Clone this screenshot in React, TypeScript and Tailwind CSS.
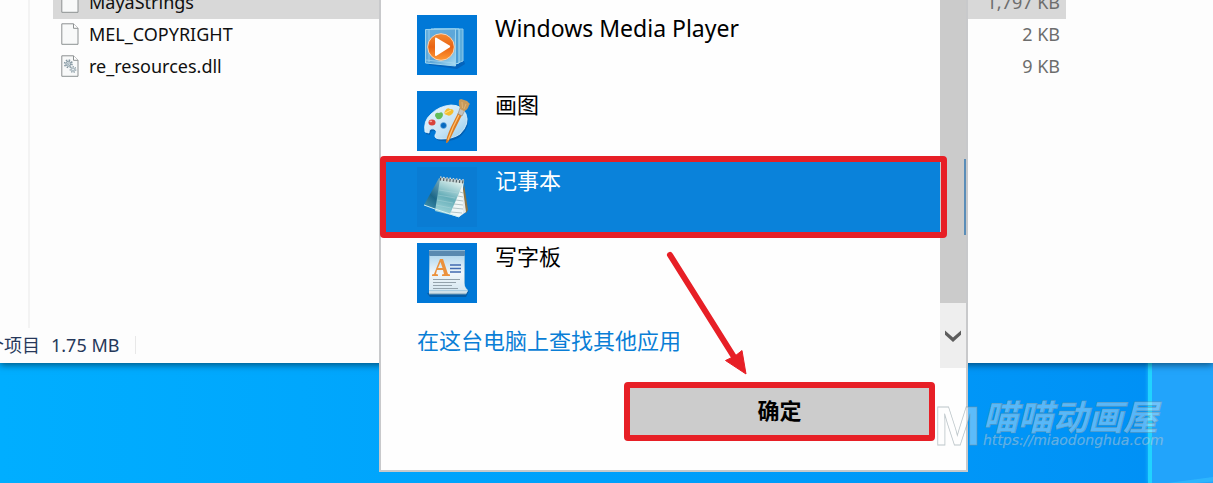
import React from "react";

function PageIcon({ gears = false }: { gears?: boolean }) {
  return (
    <svg width="18" height="22" viewBox="0 0 18 22" fill="none" className="block">
      <path d="M.8.8H12.5L17 5.3V21.3H.8Z" fill="#f8f9f9" stroke="#8d9192" />
      <path d="M12.5.8V5.3H17" fill="#fff" stroke="#8d9192" />
      {gears && (
        <g stroke="#8799a3">
          <circle cx="7.3" cy="8.8" r="3.7" strokeWidth="1.6" strokeDasharray="1.5 1.4" />
          <circle cx="7.3" cy="8.8" r="2.5" fill="#d3dde2" strokeWidth="1" />
          <circle cx="7.3" cy="8.8" r=".8" fill="#fff" strokeWidth=".7" />
          <circle cx="12" cy="14.5" r="2.7" strokeWidth="1.4" strokeDasharray="1.2 1.2" />
          <circle cx="12" cy="14.5" r="1.6" fill="#e5ebee" strokeWidth=".8" />
        </g>
      )}
    </svg>
  );
}

function MediaPlayerIcon() {
  return (
    <svg viewBox="0 0 60 60" width="60" height="60">
      <defs>
        <linearGradient id="mp-case" x1="0" y1="0" x2="1" y2="1">
          <stop stopColor="#65afe0" />
          <stop offset=".55" stopColor="#5ca6d8" />
          <stop offset="1" stopColor="#a8dcf3" />
        </linearGradient>
        <linearGradient id="mp-disc" x1="0" y1="0" x2="0" y2="1">
          <stop stopColor="#f38a31" />
          <stop offset=".5" stopColor="#ea6413" />
          <stop offset="1" stopColor="#ff9a35" />
        </linearGradient>
      </defs>
      <path d="M12 50 40 54 48 49 47 46 10 45Z" fill="#0552a5" opacity=".55" />
      <path d="M17 14H46V46L38 49Z" fill="#5daddd" stroke="#8ecaeb" />
      <path d="M14 14H42V48L35 50Z" fill="#4b9ed5" stroke="#a8ddf4" />
      <path d="M8.5 14.5 38.5 14V51L8.5 48Z" fill="url(#mp-case)" stroke="#9ad2ee" />
      <path d="M12 15V47M9 45 38 48" stroke="#a9d7ef" strokeWidth=".7" fill="none" />
      <circle cx="24" cy="32" r="13.3" fill="url(#mp-disc)" stroke="#f7d4b7" strokeWidth="1" />
      <path d="M18 23.5Q18 22 19.5 22.8L32.5 30.5Q34 31.5 32.5 32.6L19.5 40.8Q18 41.5 18 40Z" fill="#fff" />
    </svg>
  );
}

function PaintIcon() {
  return (
    <svg viewBox="0 0 60 60" width="60" height="60">
      <defs>
        <linearGradient id="pt-board" x1="0" y1="0" x2="1" y2="1">
          <stop stopColor="#e9f4fb" />
          <stop offset=".6" stopColor="#c6e4f6" />
          <stop offset="1" stopColor="#8fc8eb" />
        </linearGradient>
      </defs>
      <path d="M8 42Q6 31 14 24 22 16 34 15 45 15 49 24 53 34 43 44 36 50 24 49 17 49 18 44 21 40 17 39 12 38 12 43Z" fill="#064e98" opacity=".55" transform="translate(1 1)" />
      <path d="M8 41Q6 30 14 23 22 15 34 14 45 14 49 23 53 33 43 43 36 48 24 48 17 48 18 44 21 40 17 38 12 37 12 42Z" fill="url(#pt-board)" stroke="#e5f5fe" strokeWidth=".8" />
      <circle cx="26.5" cy="34.5" r="3" fill="#086ac0" stroke="#74b2dd" strokeWidth=".6" />
      <ellipse cx="15" cy="31.5" rx="3.5" ry="3" fill="#d8433c" />
      <ellipse cx="13.8" cy="30.4" rx="1.4" ry=".8" fill="#f4a5a1" />
      <path d="M18 25Q18 21 22 22 26 20 26 24 25 29 20 28Z" fill="#62bd5a" />
      <path d="M28 20Q30 16 33 18 38 18 36 22 33 26 30 24Q26 23 28 20Z" fill="#f6bd2f" />
      <path d="M28 22 34 19" stroke="#ffe28a" />
      <path d="M41 22 45 24 36 42Q31 53 29 52 29 47 34 36Z" fill="#dd7b20" />
      <path d="M42 24Q36 35 31 49" fill="none" stroke="#ffc071" strokeWidth="1.3" />
      <path d="M43 17 48 19 45 25 41 23Z" fill="#c4c3bf" stroke="#87735f" strokeWidth=".5" />
      <path d="M42 9 44 8 47 9 50 10 53 13 52 14Q51 19 47 20L43 18Q41 13 42 9Z" fill="#c89a5b" />
      <path d="M45 11 45.5 17M49 13 47 18" stroke="#e4bf84" strokeWidth=".7" />
    </svg>
  );
}

function NotepadIcon() {
  return (
    <svg viewBox="0 0 60 60" width="60" height="60">
      <defs>
        <linearGradient id="np-sheet" x1=".6" y1="0" x2=".3" y2="1">
          <stop stopColor="#dff1ee" />
          <stop offset=".5" stopColor="#65adb8" />
          <stop offset="1" stopColor="#a9dbde" />
        </linearGradient>
        <linearGradient id="np-back" x1="1" y1="0" x2="0" y2="1">
          <stop stopColor="#c7e9f1" />
          <stop offset=".65" stopColor="#1c6788" />
          <stop offset="1" stopColor="#4fa3c0" />
        </linearGradient>
      </defs>
      <path d="M47 17 51 43 49 46 43 43Z" fill="#8b7444" />
      <path d="M45 15 49 45 42 50 40 20Z" fill="#e2e8ea" />
      <path d="M22 11 7 38 21 43 40 47 47 16Z" fill="url(#np-back)" />
      <path d="M23 12 46 15 42 50 18 44Z" fill="url(#np-sheet)" />
      <path d="M46 17 33 47 42 50 46 46Z" fill="#f0f7f7" />
      <path d="M43 25 46 26M41 29 46 30M39 33 46 34M37 37 46 38M36 41 46 42M34 45 45 46" stroke="#a5b7b9" strokeWidth=".8" />
      <path d="M22 23 41 26M21 28 38 31M20 33 36 36M19 38 34 41" stroke="#bddfe3" strokeWidth=".6" opacity=".6" />
      <path d="M7 38 18 42 42 50" stroke="#d5f0f3" fill="none" />
      <path d="M23 12 47 15" stroke="#c8d3d4" strokeWidth="3" />
      <path d="M23 11.5 47 14.5" stroke="#536366" strokeWidth="4" strokeDasharray="1.2 2" />
      <path d="M23 10 47 13" stroke="#e2eaeb" strokeWidth="1.2" strokeDasharray="1.5 1.7" />
    </svg>
  );
}

function WordpadIcon() {
  return (
    <svg viewBox="0 0 60 60" width="60" height="60">
      <defs>
        <linearGradient id="wp-page" x1="0" y1="0" x2="0" y2="1">
          <stop stopColor="#b4d8ee" />
          <stop offset=".5" stopColor="#f0f7fb" />
          <stop offset="1" stopColor="#d7e8f1" />
        </linearGradient>
      </defs>
      <path d="M10 50 52 48 49 54H13Z" fill="#0b4f8c" opacity=".65" />
      <path d="M12 8H48V43L51 48 49 51H12Z" fill="#83b8da" />
      <path d="M13 13H47V40Q48 46 51 47H12Z" fill="url(#wp-page)" />
      <rect x="12" y="7" width="36" height="6" rx="1" fill="#5989b0" />
      <path d="M12 7.5H48" stroke="#8eb8d5" />
      <path d="M15 33V31.5L17 31 23 16H26L31 31 33 31.5V33H25V31.5L27 31 26 27H20L19 31 21 31.5V33ZM21 25H25.5L23.5 19Z" fill="#eb923d" fillRule="evenodd" />
      <path d="M33 22H44M33 25.5H44M33 29H44" stroke="#416bb0" strokeWidth="1.7" />
      <path d="M16 36.5H43M16 39.5H39M16 42.5H35M16 45.5H41" stroke="#93a2ab" strokeWidth="1" />
      <path d="M12 47.5H51L49 51H12Z" fill="#d0e0e8" />
      <path d="M12 51H49" stroke="#769cb4" />
    </svg>
  );
}

const files = [
  { name: "MayaStrings", size: "1,797 KB", selected: true },
  { name: "MEL_COPYRIGHT", size: "2 KB" },
  { name: "re_resources.dll", size: "9 KB", gears: true },
];

const apps = [
  { name: "Windows Media Player", Icon: MediaPlayerIcon, latin: true },
  { name: "画图", Icon: PaintIcon },
  { name: "记事本", Icon: NotepadIcon, selected: true },
  { name: "写字板", Icon: WordpadIcon },
];

function Explorer() {
  return (
    <section className="relative h-[363px] overflow-hidden bg-[#fdfdfd] shadow-[0_2px_7px_#00000080]">
      <div className="flex h-[328px] items-start">
        <div className="h-full w-[30px] shrink-0 border-r-2 border-[#f3f3f3]" />
        <table className="-mt-[13px] mr-[147px] ml-[23px] grow border-collapse text-lg">
          <tbody>
            {files.map((f) => (
              <tr key={f.name} className={f.selected ? "h-8 bg-[#d8d8d8]" : "h-8"}>
                <td className="p-0 pb-[2px] pl-2 text-[#101010]">
                  <div className="flex items-center gap-[10px]">
                    <PageIcon gears={f.gears} />
                    <span className="leading-[30px]">{f.name}</span>
                  </div>
                </td>
                <td className="p-0 pr-[6px] pb-[2px] text-right leading-[30px] text-[#6d6d6d]">{f.size}</td>
              </tr>
            ))}
          </tbody>
        </table>
      </div>
      <footer className="-ml-[14px] flex h-[35px] items-center pb-[2px] text-lg text-[#26385a]">
        <span>个项目</span>
        <span className="ml-[11px]">1.75 MB</span>
        <span className="ml-4 h-[18px] w-px bg-[#e8e8e8]" />
      </footer>
    </section>
  );
}

function OpenWithDialog() {
  return (
    <section className="absolute top-0 left-[379px] w-[589px] border-2 border-t-0 border-[#c8c9cb] bg-[#fefefe]">
      <div className="flex h-[368px]">
        <div className="min-w-0 grow pt-[7px]">
          {apps.map(({ name, Icon, selected, latin }) => (
            <button
              key={name}
              type="button"
              className={
                selected
                  ? "relative flex h-[76px] w-full items-start gap-[18px] bg-[#0a82da] pt-2 pl-9 text-left text-white"
                  : "flex h-[76px] w-full items-start gap-[18px] pt-2 pl-9 text-left text-black"
              }
            >
              <span className={selected ? "bg-[#0a7cd3]" : "bg-[#0078d7]"}>
                <Icon />
              </span>
              <span className={latin ? "text-[23px] leading-[26px]" : "text-[22px] leading-[26px]"}>{name}</span>
              {selected && (
                <span className="absolute -top-[3px] -right-[7px] -bottom-[3px] -left-px rounded-sm border-6 border-[#e71f26]" />
              )}
            </button>
          ))}
          <a href="#more" className="mt-[13px] ml-9 block text-[22px] leading-8 text-[#0a7ed6]">
            在这台电脑上查找其他应用
          </a>
        </div>
        <div className="flex w-[26px] shrink-0 flex-col bg-[#cbcbcb]">
          <div className="h-[159px]" />
          <div className="h-[76px] w-[2px] self-end bg-[#5a8db8]" />
          <button type="button" aria-label="向下滚动" className="mt-auto flex h-[65px] items-center justify-center bg-[#eee]">
            <svg width="18" height="14" viewBox="0 0 18 14">
              <path d="M1 1.5 9 8.5 17 1.5V5.8L9 13 1 5.8Z" fill="#5d5d5d" />
            </svg>
          </button>
        </div>
      </div>
      <div className="flex justify-end pt-[14px] pr-[31px] pb-[29px]">
        <button
          type="button"
          className="box-content flex h-[45px] w-[299px] items-center justify-center rounded-sm border-6 border-[#e71f26] bg-[#cccccc] pb-[2px] text-[22px] font-bold text-black"
        >
          确定
        </button>
      </div>
      <svg width="86" height="130" viewBox="0 0 86 130" className="absolute top-[250px] left-[282px]">
        <path d="M7 5 71 107" stroke="#e71f26" strokeWidth="6" strokeLinecap="round" />
        <path d="M83 124 62.5 110.5 72 106 79 100.500Z" fill="#e71f26" stroke="#e71f26" strokeLinejoin="round" />
      </svg>
    </section>
  );
}

function Watermark() {
  return (
    <svg width="236" height="60" viewBox="0 0 236 60" className="absolute top-[398px] left-[934px]" fill="#fff" fillOpacity=".36" stroke="#7f9299" strokeOpacity=".5" strokeWidth=".8">
      <text x="0" y="47" fontSize="56" fontWeight="bold" fontFamily="Liberation Sans, sans-serif">M</text>
      <text x="49" y="32" fontSize="35" fontWeight="bold" fontStyle="italic" fontFamily="Noto Sans CJK SC, sans-serif">喵喵动画屋</text>
      <text x="49" y="47" fontSize="14" fontStyle="italic" strokeWidth=".4" fontFamily="DejaVu Sans, sans-serif">https://miaodonghua.com</text>
    </svg>
  );
}

export default function App() {
  return (
    <main className="relative min-h-screen overflow-hidden bg-linear-to-r from-[#00aeff] via-[#009dfa] via-60% to-[#008ff5] font-['Noto_Sans','Noto_Sans_CJK_SC',sans-serif]">
      <div className="absolute inset-y-0 left-[1148px] right-0 border-l-4 border-[#20d4ff] bg-[#22a4fb] shadow-[0_0_4px_#20bfff]" />
      <svg width="80" height="16" viewBox="0 0 80 16" className="absolute left-[1153px] top-[472px]">
        <path d="M0 13 60 5 80 2V8L18 13Z" fill="#35c2ff" opacity=".6" />
      </svg>
      <Explorer />
      <OpenWithDialog />
      <Watermark />
    </main>
  );
}
